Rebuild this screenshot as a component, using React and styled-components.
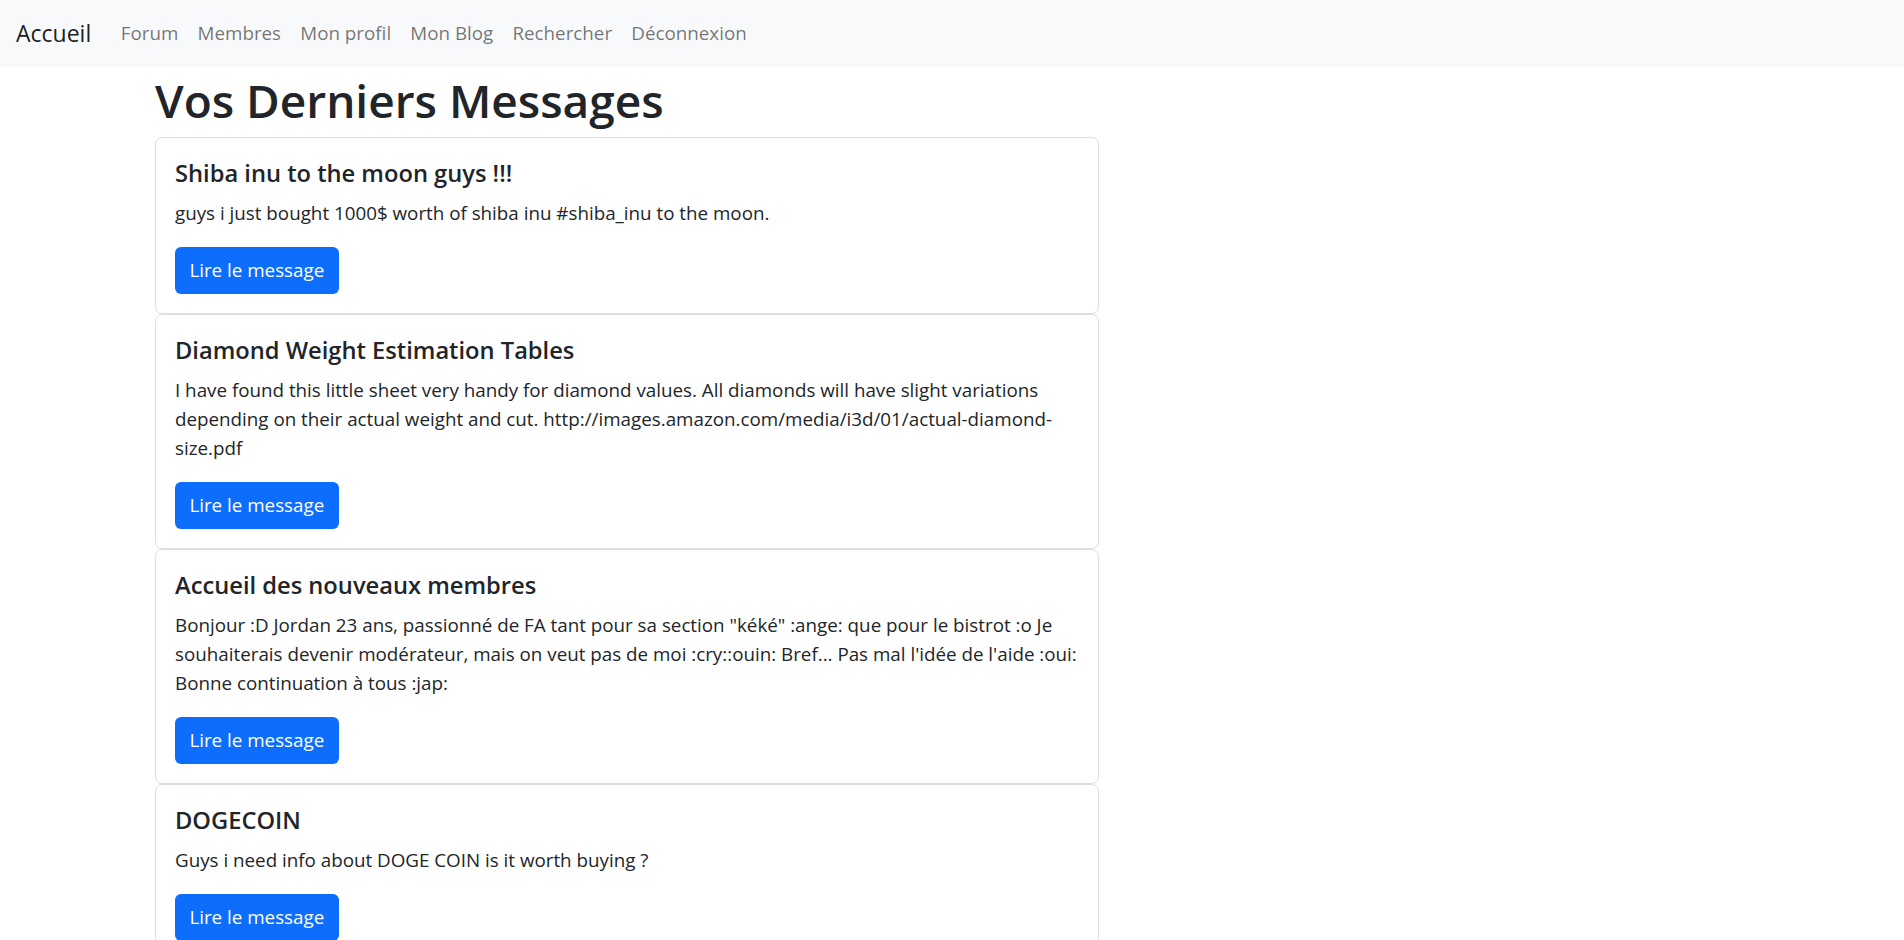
import React from "react";
import styled, { createGlobalStyle } from "styled-components";

const Global = createGlobalStyle`
  *, *::before, *::after { box-sizing: border-box; }
  body {
    margin: 0;
    font-family: "Open Sans", "Noto Sans", "Liberation Sans", sans-serif;
    font-size: 18.8px;
    line-height: 1.5;
    color: #212529;
    background: #fff;
  }
`;

const Navbar = styled.nav`
  display: flex;
  align-items: center;
  height: 67px;
  padding: 0 16px 1px;
  background: #f8f9fa;
`;

const Brand = styled.a`
  font-size: 23px;
  color: rgba(0, 0, 0, 0.9);
  text-decoration: none;
  margin-right: 20px;
`;

const NavList = styled.ul`
  display: flex;
  list-style: none;
  margin: 0;
  padding: 0;
`;

const NavLink = styled.a`
  display: block;
  padding: 8px 9.6px;
  font-size: 18.8px;
  color: rgba(0, 0, 0, 0.55);
  text-decoration: none;
`;

const Main = styled.main`
  padding-left: 155px;
`;

const Title = styled.h1`
  margin: 4px 0 6px;
  font-size: 46px;
  font-weight: 600;
  line-height: 1.3;
  color: #212529;
`;

const CardList = styled.div`
  display: flex;
  flex-direction: column;
  width: 944px;
`;

const Card = styled.article`
  border: 1px solid #dfdfdf;
  border-radius: 7px;
  padding: 19px;
  background: #fff;
`;

const CardTitle = styled.h5`
  margin: 0 0 9px;
  font-size: 23.7px;
  font-weight: 600;
  line-height: 33px;
`;

const CardText = styled.p`
  margin: 0 0 19px;
  font-size: 18.8px;
  line-height: 29px;
`;

const Button = styled.a`
  display: inline-flex;
  align-items: center;
  height: 47px;
  padding: 0 14.4px;
  background: #0d6efd;
  color: #fff;
  border-radius: 6px;
  font-size: 18.8px;
  text-decoration: none;
`;

const links = ["Forum", "Membres", "Mon profil", "Mon Blog", "Rechercher", "Déconnexion"];

const messages = [
  {
    title: "Shiba inu to the moon guys !!!",
    text: "guys i just bought 1000$ worth of shiba inu #shiba_inu to the moon.",
  },
  {
    title: "Diamond Weight Estimation Tables",
    text: "I have found this little sheet very handy for diamond values. All diamonds will have slight variations depending on their actual weight and cut. http://images.amazon.com/media/i3d/01/actual-diamond-size.pdf",
  },
  {
    title: "Accueil des nouveaux membres",
    text: "Bonjour :D Jordan 23 ans, passionné de FA tant pour sa section \"kéké\" :ange: que pour le bistrot :o Je souhaiterais devenir modérateur, mais on veut pas de moi :cry::ouin: Bref... Pas mal l'idée de l'aide :oui: Bonne continuation à tous :jap:",
  },
  {
    title: "DOGECOIN",
    text: "Guys i need info about DOGE COIN is it worth buying ?",
  },
];

export default function App() {
  return (
    <>
      <Global />
      <Navbar>
        <Brand href="#">Accueil</Brand>
        <NavList>
          {links.map((l) => (
            <li key={l}>
              <NavLink href="#">{l}</NavLink>
            </li>
          ))}
        </NavList>
      </Navbar>
      <Main>
        <Title>Vos Derniers Messages</Title>
        <CardList>
          {messages.map((m) => (
            <Card key={m.title}>
              <CardTitle>{m.title}</CardTitle>
              <CardText>{m.text}</CardText>
              <Button href="#">Lire le message</Button>
            </Card>
          ))}
        </CardList>
      </Main>
    </>
  );
}
